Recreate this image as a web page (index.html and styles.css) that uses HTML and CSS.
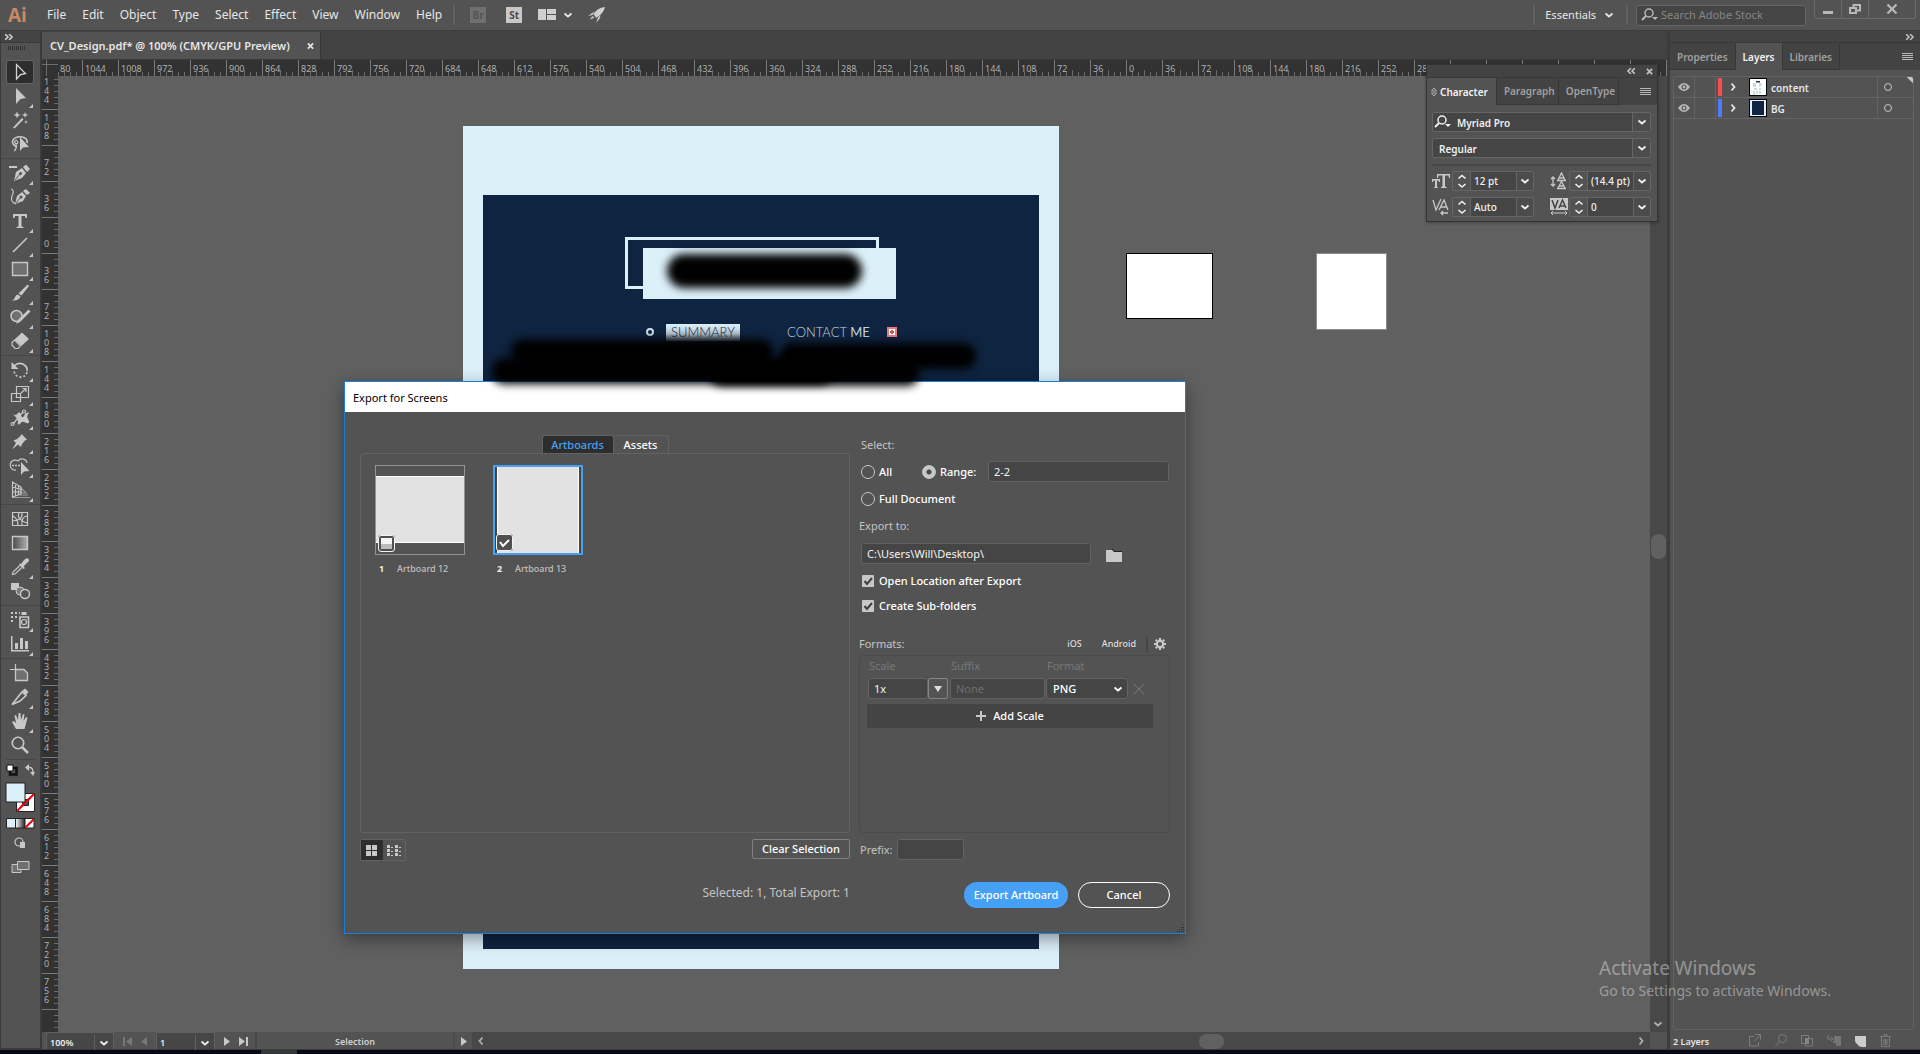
FILE: index.html
```html
<!DOCTYPE html>
<html lang="en">
<head>
<meta charset="utf-8">
<title>CV_Design.pdf</title>
<link rel="stylesheet" href="styles.css">
</head>
<body>
<svg class="defs" aria-hidden="true">
  <symbol id="chev" viewBox="0 0 10 10"><path d="M1.500 3.500L5 6.500L8.500 3.500" fill="none" stroke="currentColor" stroke-width="1.800"/></symbol>
  <symbol id="updown" viewBox="0 0 10 16"><path d="M1.500 5.500L5 2.500L8.500 5.500M1.500 11L5 14L8.500 11" fill="none" stroke="currentColor" stroke-width="1.600"/></symbol>
  <symbol id="dbl" viewBox="0 0 8 6"><path d="M0 0L3 3L0 6M4 0L7 3L4 6" fill="none" stroke="currentColor" stroke-width="1.600"/></symbol>
  <symbol id="cross" viewBox="0 0 8 8"><path d="M1 1L7 7M7 1L1 7" stroke="currentColor" stroke-width="2"/></symbol>
  <symbol id="burger" viewBox="0 0 11 8"><path d="M0 .5H11M0 2.500H11M0 4.500H11M0 6.500H11" stroke="currentColor"/></symbol>
  <symbol id="lens" viewBox="0 0 18 14"><circle cx="8" cy="5" r="4" fill="none" stroke="currentColor" stroke-width="1.500"/><path d="M5 8L1 12" stroke="currentColor" stroke-width="2"/><path d="M11 9H17L14 12Z" fill="currentColor"/></symbol>
  <symbol id="eye" viewBox="0 0 12 8"><path d="M0 4Q6 -4 12 4Q6 12 0 4Z" fill="currentColor"/><circle cx="6" cy="4" r="2.500" fill="#535353"/><circle cx="6" cy="4" r="1.400" fill="currentColor"/></symbol>
</svg>
<div class="app">
  <header class="menubar">
    <span class="logo">Ai</span>
    <nav class="menus">
      <button>File</button><button>Edit</button><button>Object</button><button>Type</button><button>Select</button><button>Effect</button><button>View</button><button>Window</button><button>Help</button>
    </nav>
    <span class="bar-sep"></span>
    <button class="badge dim">Br</button>
    <button class="badge">St</button>
    <button class="arrange" aria-label="Arrange documents"><svg width="18" height="11"><path d="M0 0H8V11H0ZM9 0H18V5H9ZM9 6H18V11H9Z" fill="#cfcfcf"/></svg><svg class="i10"><use href="#chev"/></svg></button>
    <button class="rocket" aria-label="GPU performance"><svg width="18" height="18" viewBox="0 0 20 18"><path d="M19 0Q10 1 6 8L9 12Q17 8 19 0ZM7 5L0 10L5 9ZM11 12L9 18L13 13L14 9ZM5 10L2 14L7 12Z" fill="#cfcfcf"/></svg></button>
    <span class="grow"></span>
    <span class="bar-sep"></span>
    <button class="workspace">Essentials<svg class="i10"><use href="#chev"/></svg></button>
    <span class="bar-sep"></span>
    <label class="search"><svg width="18" height="14"><use href="#lens"/></svg><input type="text" aria-label="Search Adobe Stock" placeholder="Search Adobe Stock"></label>
    <div class="winbtns">
      <button aria-label="Minimize"><svg width="12" height="10"><path d="M1 7H11V10H1Z" fill="#b8b8b8"/></svg></button>
      <button aria-label="Restore"><svg width="12" height="10" fill="none" stroke="#b8b8b8" stroke-width="2"><path d="M1 4H7V9H1ZM4.500 3V1H11V6.500H8"/></svg></button>
      <button aria-label="Close"><svg width="12" height="10"><path d="M1.500 .5L10.500 9.500M10.500 .5L1.500 9.500" stroke="#b8b8b8" stroke-width="2.200"/></svg></button>
    </div>
  </header>

  <main class="work">
    <aside class="tools">
      <div class="tools-head"><svg width="8" height="6"><use href="#dbl"/></svg></div>
      <div class="grip"></div>
      <div class="toolset">
        <button class="on" aria-label="Selection"><svg viewBox="0 0 24 24"><path d="M8.500 4.500V19L12.500 14.500L17.500 13.500Z" fill="none" stroke="#d4d4d4" stroke-width="1.300"/></svg></button>
        <button class="more" aria-label="Direct selection"><svg viewBox="0 0 24 24"><path d="M8 4V20L12.500 15L18 14Z"/></svg></button>
        <button aria-label="Magic wand"><svg viewBox="0 0 24 24"><path d="M5 19.500L14 10L15.500 11.500L6.500 20.500ZM9 3.500L10 6L12.500 7L10 8L9 10.500L8 8L5.500 7L8 6ZM17 4L17.700 6L20 7L17.700 8L17 10L16.300 8L14 7L16.300 6ZM18 12L18.500 13.500L20 14L18.500 14.500L18 16L17.500 14.500L16 14L17.500 13.500Z"/></svg></button>
        <button aria-label="Lasso"><svg viewBox="0 0 24 24"><path d="M9 15Q3 12 5 8Q8 4 14 5Q20 6 19 11" class="s2"/><path d="M9 8Q5 9 8 12Q11 11 9 9M8 12Q9 17 6 19" class="s"/><path d="M12 5V19L15 15.500L21 15Z"/></svg></button>
      </div>
      <div class="toolset">
        <button class="more" aria-label="Delete anchor point"><svg viewBox="0 0 24 24"><path d="M1 5H9V7H1Z"/><path d="M6 20L8 11L14 7L18 12L14 17ZM15 6L18 3.500L22 8L19 11Z"/><path d="M7 19L12 13" stroke="#535353"/><circle cx="12.500" cy="12.500" r="1.500" fill="#535353"/></svg></button>
        <button aria-label="Curvature"><svg viewBox="0 0 24 24"><path d="M3 4Q7 5 4 11Q2 17 8 19" class="s"/><path d="M7 19L9 11L14 7L18 11L15 16ZM15 6L18 4L22 8L19 10Z"/><path d="M8 18L13 12" stroke="#535353"/><circle cx="13" cy="12" r="1.500" fill="#535353"/></svg></button>
        <button class="more" aria-label="Type"><svg viewBox="0 0 24 24"><path d="M5 5H19V9H17.500L17 7H13.500V17.500L15.500 18V19H8.500V18L10.500 17.500V7H7L6.500 9H5Z"/></svg></button>
        <button class="more" aria-label="Line segment"><svg viewBox="0 0 24 24"><path d="M5 19L19 5" class="s2"/></svg></button>
        <button class="more" aria-label="Rectangle"><svg viewBox="0 0 24 24"><path d="M4.500 5.500H19.500V18.500H4.500Z" fill="#707070" stroke="#c8c8c8" stroke-width="1.400"/></svg></button>
        <button class="more" aria-label="Paintbrush"><svg viewBox="0 0 24 24"><path d="M19.500 3.500L21 5L13.500 14.500L10.500 12.500ZM10 13.500L12.500 15.500Q11 20 4 19.500Q7 18 7 16Q8 13.500 10 13.500Z"/></svg></button>
        <button class="more" aria-label="Shaper"><svg viewBox="0 0 24 24"><circle cx="8.500" cy="11" r="5.500" fill="#707070" stroke="#c8c8c8" stroke-width="1.500"/><path d="M20.500 4.500L22.500 6.500L12 17L8 19L10 15Z"/></svg></button>
        <button class="more" aria-label="Eraser"><svg viewBox="0 0 24 24"><path d="M14 3.500L21 10L13.500 17L6.500 10.500Z"/><path d="M6.500 11L12.500 17L10 19.500H7L4 16V13.500Z" class="s"/></svg></button>
      </div>
      <div class="toolset">
        <button class="more" aria-label="Rotate"><svg viewBox="0 0 24 24"><path d="M6 8Q10 4 15 6Q20 9 19 13" class="s2"/><path d="M3.500 4V11H10.500Z"/><path d="M19 14Q17 20 11 19Q7 18 6 13" class="s2" stroke-dasharray="2 2"/></svg></button>
        <button class="more" aria-label="Scale"><svg viewBox="0 0 24 24"><path d="M3.500 11.500H12.500V19.500H3.500ZM8.500 4.500H20.500V15.500H8.500ZM13 11L18 6.500M14.500 6.500H18V10" class="s"/></svg></button>
        <button class="more" aria-label="Width"><svg viewBox="0 0 24 24"><path d="M5 8Q8 10 9 8Q12 4 13 9Q14 13 16 10Q18 5 21 7Q18 10 20 13Q23 18 18 17Q14 14 12 18Q9 20 10 15Q9 12 5 8Z"/><path d="M5 18L15 6" class="s"/><circle cx="4.500" cy="18" r="1.500" class="s"/><circle cx="16" cy="5.500" r="1.500" class="s"/></svg></button>
        <button class="more" aria-label="Puppet warp"><svg viewBox="0 0 24 24"><path d="M13.500 4L19 9.500L17 10.500L14 14L13 17L10 14.500L4 19.500L8 13L5.500 10.500L9 9L12.500 6Z"/></svg></button>
        <button class="more" aria-label="Shape builder"><svg viewBox="0 0 24 24"><path d="M8 16A5 5 0 1 1 10 7A5 5 0 0 1 19 9" class="s"/><path d="M4 11.500H14" class="s2" stroke-dasharray="2 1"/><path d="M13 8V21L16 17.500L21.500 17Z"/></svg></button>
        <button class="more" aria-label="Perspective grid"><svg viewBox="0 0 24 24"><path d="M4.500 4V19L13 16V9ZM4 9L13 11.500M4 14L13 14M7.500 5.500V18M10.500 7.500V17" class="s"/><path d="M13 10L18 15H13ZM4 19.500H22M12 17H20" class="s" opacity=".6"/></svg></button>
      </div>
      <div class="toolset">
        <button aria-label="Mesh"><svg viewBox="0 0 24 24"><path d="M4.500 5.500H19.500V18.500H4.500ZM5 9Q10 12 10 18M5 14Q15 13 14 6M11 6Q8 12 19 16M19 9Q13 10 14 18" class="s"/></svg></button>
        <button aria-label="Gradient"><svg viewBox="0 0 24 24"><defs><linearGradient id="g1"><stop stop-color="#4a4a4a"/><stop offset="1" stop-color="#b0b0b0"/></linearGradient></defs><path d="M4.500 5.500H19.500V18.500H4.500Z" fill="url(#g1)" stroke="#c8c8c8" stroke-width="1.400"/></svg></button>
        <button class="more" aria-label="Eyedropper"><svg viewBox="0 0 24 24"><path d="M13 9L16 5Q19 2 20.500 4Q22 6 19 8L15.500 11.500L17 13L15.500 14L11 9.500L12 8.500Z"/><path d="M12 10.500L5 17L4.500 19.500L7 19L14 12.500" class="s"/></svg></button>
        <button aria-label="Blend"><svg viewBox="0 0 24 24"><path d="M3 4H11V11H3Z"/><circle cx="12" cy="12" r="4" fill="#7b7b7b" stroke="#c8c8c8"/><circle cx="17" cy="15" r="4.500" fill="#535353" stroke="#c8c8c8" stroke-width="1.500"/></svg></button>
      </div>
      <div class="toolset">
        <button class="more" aria-label="Symbol sprayer"><svg viewBox="0 0 24 24"><path d="M3 4H5V6H3ZM7 4H9V6H7ZM11 4H12V6H11ZM3 8H5V10H3ZM7 8H9V10H7ZM3 12H5V14H3ZM13.500 4H18.500V7H13.500Z"/><path d="M12 9H20.500V19.500H12Z" class="s2"/><circle cx="16" cy="14" r="2.500" class="s"/></svg></button>
        <button class="more" aria-label="Column graph"><svg viewBox="0 0 24 24"><path d="M3 4H4.500V18H21V19.500H3ZM7 11H10V17H7ZM12 6H15V17H12ZM17 9H20V17H17Z"/></svg></button>
      </div>
      <div class="toolset">
        <button aria-label="Artboard"><svg viewBox="0 0 24 24"><path d="M7.500 3V8M2 8.500H7" class="s"/><path d="M7.500 8.500H16L19.500 12V19.500H7.500Z" fill="#707070" stroke="#c8c8c8" stroke-width="1.300"/></svg></button>
        <button class="more" aria-label="Slice"><svg viewBox="0 0 24 24"><path d="M4 19.500L14 7L18 10.500L12 16L4 19.500Z" class="s2"/><path d="M14 6L17 3.500L20.500 7L18 10Z"/></svg></button>
        <button class="more" aria-label="Hand"><svg viewBox="0 0 24 24"><path d="M8 20L4 13L5.500 12L8 14L6.500 6.500L8 6L10 11L10.500 4H12.500L13 11L15 5L16.500 5.500L15.500 12L18 8L19.500 9L16.500 20Z"/></svg></button>
        <button aria-label="Zoom"><svg viewBox="0 0 24 24"><circle cx="10" cy="10" r="5.700" class="s2"/><path d="M14 14L20 20" stroke="#c8c8c8" stroke-width="2.500"/></svg></button>
      </div>
      <div class="swaps">
        <svg width="12" height="12"><path d="M4 4H10.500V10.500H4Z" fill="none" stroke="#111" stroke-width="2.500"/><path d="M1 1H7V7H1Z" fill="#fff" stroke="#111"/></svg>
        <svg width="10" height="12"><path d="M1 3.500H5Q8 3.500 8 9" fill="none" stroke="#c8c8c8" stroke-width="1.300"/><path d="M0 3.500L4 0V7ZM8 12L5 8H10Z" fill="#c8c8c8"/></svg>
      </div>
      <svg class="fillstroke" width="31" height="31"><path d="M11.500 11.500H29.500V29.500H11.500Z" fill="#fff" stroke="#222"/><path d="M12 29L29 12" stroke="#f00012" stroke-width="2"/><path d="M17.500 17.500H23.500V23.500H17.500Z" fill="#535353" stroke="#222"/><path d="M16 25L25 16" stroke="#f00012" stroke-width="2"/><path d="M1 1H20V20H1Z" fill="#dcf0fa" stroke="#222"/></svg>
      <svg class="modes" width="29" height="11"><defs><linearGradient id="g2"><stop stop-color="#fff"/><stop offset="1" stop-color="#222"/></linearGradient></defs><path d="M.5 .5H9.500V10H.5Z" fill="#dcf0fa" stroke="#222"/><path d="M9.500 .5H19V10H9.500Z" fill="url(#g2)" stroke="#222"/><path d="M19 .5H28V10H19Z" fill="#fff" stroke="#222"/><path d="M19.500 9.500L28 1" stroke="#f00012" stroke-width="2"/></svg>
      <div class="toolset last">
        <button aria-label="Draw mode"><svg viewBox="0 0 24 24"><circle cx="11" cy="11" r="4" class="s"/><path d="M12 11H17V17H12Z"/></svg></button>
        <button aria-label="Screen mode"><svg viewBox="0 0 24 24"><path d="M4 9.500H13V17.500H4Z" fill="#707070" stroke="#c8c8c8"/><path d="M9.500 6.500H21V14.500H9.500Z" fill="#707070" stroke="#c8c8c8"/></svg></button>
      </div>
    </aside>

    <section class="doc">
      <div class="tabs"><div class="tab">CV_Design.pdf* @ 100% (CMYK/GPU Preview)<button aria-label="Close document"><svg width="7" height="8"><use href="#cross"/></svg></button></div></div>
      <div class="view">
        <div class="corner"></div>
        <div class="hruler"><div class="hticks"><span>80</span><span>1044</span><span>1008</span><span>972</span><span>936</span><span>900</span><span>864</span><span>828</span><span>792</span><span>756</span><span>720</span><span>684</span><span>648</span><span>612</span><span>576</span><span>540</span><span>504</span><span>468</span><span>432</span><span>396</span><span>360</span><span>324</span><span>288</span><span>252</span><span>216</span><span>180</span><span>144</span><span>108</span><span>72</span><span>36</span><span>0</span><span>36</span><span>72</span><span>108</span><span>144</span><span>180</span><span>216</span><span>252</span><span>28</span></div></div>
        <div class="vruler"><span>144</span><span>108</span><span>72</span><span>36</span><span>0</span><span>36</span><span>72</span><span>108</span><span>144</span><span>180</span><span>216</span><span>252</span><span>288</span><span>324</span><span>360</span><span>396</span><span>432</span><span>468</span><span>504</span><span>540</span><span>576</span><span>612</span><span>648</span><span>684</span><span>720</span><span>756</span></div>
        <div class="canvas">
          <div class="page">
            <div class="cv">
              <div class="frame"></div>
              <div class="plate"></div>
              <span class="ring"></span>
              <h2 class="summary">SUMMARY</h2>
              <h2 class="contact">CONTACT <b>ME</b></h2>
              <svg class="plus" width="10" height="10"><path d="M0 0H10V10H0Z" fill="#e87c7c"/><path d="M2 2H8V8H2Z" fill="#fff"/><path d="M4 3H6V4H7V6H6V7H4V6H3V4H4Z" fill="#d85050"/></svg>
            </div>
          </div>
          <div class="board wide"></div>
          <div class="board tall"></div>
        </div>
        <div class="vscroll"><i></i><svg class="i10"><use href="#chev"/></svg></div>
        <footer class="status">
          <label class="stfield"><input type="text" value="100%" aria-label="Zoom"><svg class="i10"><use href="#chev"/></svg></label>
          <button class="st-prev off" aria-label="First"><svg width="9" height="9"><path d="M0 0H2V9H0ZM9 0V9L3 4.500Z"/></svg></button>
          <button class="st-prev off" aria-label="Previous"><svg width="6" height="9"><path d="M6 0V9L0 4.500Z"/></svg></button>
          <label class="stfield page-no"><input type="text" value="1" aria-label="Artboard number"><svg class="i10"><use href="#chev"/></svg></label>
          <button class="st-next" aria-label="Next"><svg width="6" height="9"><path d="M0 0V9L6 4.500Z"/></svg></button>
          <button class="st-next" aria-label="Last"><svg width="9" height="9"><path d="M7 0H9V9H7ZM0 0V9L6 4.500Z"/></svg></button>
          <span class="st-tool">Selection</span>
          <button class="st-menu" aria-label="Status menu"><svg width="6" height="9"><path d="M0 0V9L6 4.500Z"/></svg></button>
          <div class="hscroll"><svg class="i10 turn-left"><use href="#chev"/></svg><i></i><svg class="i10 turn-right"><use href="#chev"/></svg></div>
        </footer>
      </div>
    </section>

    <aside class="dock">
      <div class="dock-head"><svg width="8" height="6"><use href="#dbl"/></svg></div>
      <div class="ptabs"><button>Properties</button><button class="on">Layers</button><button>Libraries</button><svg width="11" height="8"><use href="#burger"/></svg></div>
      <div class="layers">
        <div class="layer red"><span class="cell"><svg width="12" height="8"><use href="#eye"/></svg></span><span class="cell"></span><i class="color"></i><svg class="i10 turn-right"><use href="#chev"/></svg><svg class="thumb" width="18" height="18"><path d="M0 0H18V18H0Z" fill="#000"/><path d="M1 1H17V17H1Z" fill="#fff"/><path d="M7 3H11V4.500H7Z" fill="#234"/><path d="M4 6H7M10 6H13M4 8H7M10 8H12M5 11H8M10 11H12M5 13V17M8 13V16M11 13V16" stroke="#9bb" /></svg><span class="name">content</span><span class="target"><i></i></span></div>
        <div class="layer blue"><span class="cell"><svg width="12" height="8"><use href="#eye"/></svg></span><span class="cell"></span><i class="color"></i><svg class="i10 turn-right"><use href="#chev"/></svg><svg class="thumb" width="18" height="18"><path d="M0 0H18V18H0Z" fill="#000"/><path d="M1 1H17V17H1Z" fill="#dff0fa"/><path d="M3 2H15V16H3Z" fill="#0f2440"/></svg><span class="name">BG</span><span class="target"><i></i></span></div>
      </div>
      <div class="dock-foot"><span>2 Layers</span>
        <svg width="12" height="13" viewBox="0 0 12 13"><path d="M5 2.500H.5V12H9.500V8M6 .5H11.500V5.500M11.500 .5L5.500 7" class="d"/></svg>
        <svg width="12" height="13" viewBox="0 0 12 13"><circle cx="7.500" cy="4.500" r="4" class="d"/><path d="M5 7.500L0 12.500" class="d"/></svg>
        <svg width="12" height="13" viewBox="0 0 12 13"><path d="M.5 1.500H7.500V9.500H.5ZM4.500 4.500H11.500V12H4.500Z" class="d"/><path d="M4 4H8V10H4Z" fill="#848484"/></svg>
        <svg width="14" height="13" viewBox="0 0 14 13"><path d="M1 1V5H6M4 3L6 5L4 7" class="d"/><path d="M7 2H14V12H9V9H6V7H7Z" fill="#757575"/></svg>
        <svg width="11" height="12" viewBox="0 0 11 12"><path d="M0 1H11V12H6L0 6Z" fill="#ccc"/><path d="M0 7H5V12Z" fill="#ccc"/></svg>
        <svg width="11" height="13" viewBox="0 0 11 13"><path d="M0 2.500H11M4 2V.5H7V2M1.500 3V12.500H9.500V3M4 5V11M5.500 5V11M7 5V11" class="d"/></svg>
      </div>
    </aside>
  </main>
  <div class="taskbar"><i></i></div>

  <section class="charpanel">
    <div class="char-head"><svg class="flip" width="8" height="6"><use href="#dbl"/></svg><svg width="7" height="7"><use href="#cross"/></svg></div>
    <div class="ptabs"><button class="on"><svg width="6" height="10"><path d="M.5 4L3 1L5.500 4ZM.5 6L3 9L5.500 6Z" fill="none" stroke="#aaa"/></svg>Character</button><button>Paragraph</button><button>OpenType</button><svg width="11" height="8"><use href="#burger"/></svg></div>
    <div class="char-body">
      <label class="combo"><svg width="18" height="14"><use href="#lens"/></svg><input type="text" value="Myriad Pro" aria-label="Font family"><span><svg class="i10"><use href="#chev"/></svg></span></label>
      <label class="combo style"><input type="text" value="Regular" aria-label="Font style"><span><svg class="i10"><use href="#chev"/></svg></span></label>
      <hr>
      <div class="nums">
        <label class="num"><svg width="18" height="16" fill="#c8c8c8"><path d="M5 1H18V5H17L16.500 2.500H13V13.500L14.500 14V15H9V14L10.500 13.500V2.500H6.500L6 5H5ZM0 6H8V9H7L6.500 7.500H5V14L6 14.500V15H2V14.500L3 14V7.500H1.500L1 9H0Z"/></svg><span class="spin"><svg width="10" height="16"><use href="#updown"/></svg></span><input type="text" value="12 pt" aria-label="Font size"><span class="dd"><svg class="i10"><use href="#chev"/></svg></span></label>
        <label class="num"><svg width="18" height="18" fill="none" stroke="#c8c8c8" stroke-width="1.300"><path d="M3 5V14M1 7L3 5L5 7M1 12L3 14L5 12M7 8.500H16M7 16.500H16M8 8L11.500 1L15 8M9 6H14M8 16L11.500 9.500L15 16M9 14H14"/></svg><span class="spin"><svg width="10" height="16"><use href="#updown"/></svg></span><input type="text" value="(14.4 pt)" aria-label="Leading"><span class="dd"><svg class="i10"><use href="#chev"/></svg></span></label>
        <label class="num"><svg width="18" height="18" fill="none" stroke="#c8c8c8" stroke-width="1.300"><path d="M1 2L4 12L9 1M7 12L12 2L16 12M9 9H15M16 15H9M11 13L9 15L11 17"/></svg><span class="spin"><svg width="10" height="16"><use href="#updown"/></svg></span><input type="text" value="Auto" aria-label="Kerning"><span class="dd"><svg class="i10"><use href="#chev"/></svg></span></label>
        <label class="num"><svg width="18" height="18"><path d="M0 0H18V12H0Z" fill="#c8c8c8"/><path d="M2 2L5 10L8 2M9 10L12.500 2L16 10M10 8H15" fill="none" stroke="#444" stroke-width="1.500"/><path d="M1 15H17M3 13L1 15L3 17M15 13L17 15L15 17" fill="none" stroke="#c8c8c8"/></svg><span class="spin"><svg width="10" height="16"><use href="#updown"/></svg></span><input type="text" value="0" aria-label="Tracking"><span class="dd"><svg class="i10"><use href="#chev"/></svg></span></label>
      </div>
    </div>
  </section>

  <section class="dialog" role="dialog" aria-labelledby="dlg">
    <h1 id="dlg">Export for Screens</h1>
    <div class="dlg-body">
      <div class="chooser">
        <div class="dtabs"><button class="on">Artboards</button><button>Assets</button></div>
        <div class="boards">
          <figure><div class="shot land"><input type="checkbox" aria-label="Artboard 12"></div><figcaption><b>1</b>Artboard 12</figcaption></figure>
          <figure><div class="shot port"><input type="checkbox" checked aria-label="Artboard 13"></div><figcaption><b>2</b>Artboard 13</figcaption></figure>
        </div>
      </div>
      <div class="options">
        <h2>Select:</h2>
        <div class="line range"><label class="all"><input type="radio" name="sel">All</label><label><input type="radio" name="sel" checked>Range:</label><input class="box" type="text" value="2-2" aria-label="Range value"></div>
        <div class="line short"><label><input type="radio" name="sel">Full Document</label></div>
        <h3>Export to:</h3>
        <div class="line path"><input class="box" type="text" value="C:\Users\Will\Desktop\" aria-label="Export path"><button aria-label="Browse"><svg width="16" height="13"><path d="M0 1H6L8 3H16V13H0Z" fill="#c8c8c8"/><path d="M6 .5H7L8 2.500H16" fill="none" stroke="#222"/></svg></button></div>
        <div class="line short"><label><input type="checkbox" checked>Open Location after Export</label></div>
        <div class="line short close"><label><input type="checkbox" checked>Create Sub-folders</label></div>
        <div class="fmt-head"><h3>Formats:</h3><button>iOS</button><button>Android</button><i></i><button aria-label="Settings"><svg width="12" height="12" viewBox="0 0 12 12"><circle cx="6" cy="6" r="3.200" fill="none" stroke="#c8c8c8" stroke-width="2.200"/><path d="M6 0V2M6 10V12M0 6H2M10 6H12M1.700 1.700L3 3M9 9L10.300 10.300M10.300 1.700L9 3M3 9L1.700 10.300" stroke="#c8c8c8" stroke-width="2.200"/></svg></button></div>
        <div class="formats">
          <div class="fgrid">
            <label for="sc">Scale</label><label for="su">Suffix</label><label for="fo">Format</label><span></span>
            <span class="scale"><input id="sc" class="box" type="text" value="1x"><button aria-label="Scale options"><svg width="8" height="6"><path d="M0 0H8L4 6Z" fill="#ddd"/></svg></button></span>
            <input id="su" class="box" type="text" placeholder="None">
            <span class="selwrap"><select id="fo"><option>PNG</option></select><svg class="i10"><use href="#chev"/></svg></span>
            <button class="del" aria-label="Remove"><svg width="10" height="10"><path d="M0 0L10 10M10 0L0 10" stroke="#7a7a7a"/></svg></button>
          </div>
          <button class="add"><svg width="10" height="10"><path d="M4 0H6V4H10V6H6V10H4V6H0V4H4Z" fill="#c8c8c8"/></svg>Add Scale</button>
        </div>
      </div>
      <div class="underleft"><div class="seg"><button class="on" aria-label="Grid view"><svg width="12" height="11"><path d="M0 0H5V5H0ZM6 0H11V5H6ZM0 6H5V11H0ZM6 6H11V11H6Z" fill="#c8c8c8"/></svg></button><button aria-label="List view"><svg width="15" height="11"><path d="M0 0H3V3H0ZM0 4H3V7H0ZM0 8H3V11H0ZM8 0H11V3H8ZM8 4H11V7H8ZM8 8H11V11H8ZM4 2H6V3H4ZM4 6H6V7H4ZM4 10H6V11H4ZM12 2H14V3H12ZM12 6H14V7H12ZM12 10H14V11H12Z" fill="#c8c8c8"/></svg></button></div><button class="clear">Clear Selection</button></div>
      <label class="prefix">Prefix:<input class="box" type="text"></label>
      <output>Selected: 1, Total Export: 1</output>
      <div class="actions"><button class="primary">Export Artboard</button><button class="cancel">Cancel</button></div>
    </div>
    <svg class="resize" width="10" height="10"><path d="M8 1H9V2H8ZM6 4H7V5H6ZM8 4H9V5H8ZM4 6H5V7H4ZM6 6H7V7H6ZM8 6H9V7H8ZM2 8H3V9H2ZM4 8H5V9H4ZM6 8H7V9H6ZM8 8H9V9H8Z" fill="#2e2e2e"/></svg>
  </section>

  <div class="smudge s-name"></div><div class="smudge s-intro"></div><div class="smudge s-mail"></div><div class="smudge s-text"></div><div class="smudge s-phone"></div>
  <div class="watermark"><p>Activate Windows</p><p>Go to Settings to activate Windows.</p></div>
</div>
</body>
</html>
```
FILE: styles.css
```css
* { box-sizing: border-box; }
body { margin: 0; background: #535353; color: #e6e6e6; font: 11px/16px "Noto Sans", sans-serif; }
button, input, select { font: inherit; color: inherit; background: none; border: 0; padding: 0; margin: 0; min-width: 0; }
h1, h2, h3, p, figure { margin: 0; font-size: inherit; font-weight: 400; }
svg { flex: none; display: block; }
.defs { display: none; }
.i10 { width: 10px; height: 10px; }
.turn-right { transform: rotate(-90deg); }
.turn-left { transform: rotate(90deg); }
.flip { transform: scaleX(-1); }
.grow { flex: 1; }
.app { position: relative; display: flex; flex-direction: column; height: 100vh; overflow: hidden; }

/* menu bar */
.menubar { display: flex; align-items: center; height: 31px; padding: 0 4px 1px 8px; border-bottom: 1px solid #3c3c3c; flex: none; }
.logo { width: 39px; font: 700 19px/26px "Open Sans", sans-serif; color: #c98a63; }
.menus { display: flex; gap: 16px; font-size: 12px; margin-right: 11px; }
.bar-sep { width: 2px; height: 20px; background: #616161; }
.badge { width: 16px; height: 16px; margin-left: 15px; background: #c8c8c8; color: #484848; font-size: 10px; font-weight: 700; }
.badge + .badge { margin-left: 20px; }
.badge.dim { background: #707070; color: #555; }
.arrange { display: flex; align-items: center; gap: 7px; margin-left: 16px; }
.rocket { margin-left: 15px; }
.workspace { display: flex; align-items: center; gap: 8px; margin: 0 12px 0 10px; }
.search { display: flex; align-items: center; gap: 2px; width: 170px; height: 21px; margin: 1px 8px 0 8px; padding-left: 4px; border: 1px solid #666; border-radius: 3px; background: #454545; color: #b8b8b8; }
.search input { flex: 1; }
input::placeholder { color: #858585; opacity: 1; }
.winbtns { display: flex; align-self: flex-start; height: 19px; border: 1px solid #6a6a6a; border-top: 0; border-radius: 0 0 3px 3px; }
.winbtns button { width: 27px; display: flex; align-items: center; justify-content: center; border-right: 1px solid #6a6a6a; }
.winbtns button:last-child { width: 46px; border: 0; }

/* toolbar */
.work { flex: 1; display: flex; min-height: 0; }
.tools { width: 42px; border: solid #3a3a3a; border-width: 0 2px 2px 1px; flex: none; overflow: hidden; }
.tools-head { height: 12px; padding: 3px 4px; background: #444; border-bottom: 1px solid #3a3a3a; color: #ccc; }
.grip { width: 17px; height: 4px; margin: 3px auto 10px 7px; background: repeating-linear-gradient(90deg, #333 0 1px, #535353 1px 2px); }
.toolset { padding-left: 5px; }
.toolset + .toolset { border-top: 1px solid #464646; padding-top: 2px; margin-top: 2px; }
.toolset button { position: relative; display: flex; align-items: center; justify-content: center; width: 28px; height: 24px; }
.toolset svg { width: 24px; height: 24px; fill: #c8c8c8; }
.toolset button.on { background: #2d2d2d; border: 1px solid #666; border-radius: 3px; height: 24px; }
.more::after { content: ""; position: absolute; right: 1px; bottom: 0; border: 2px solid #c8c8c8; border-top-color: transparent; border-left-color: transparent; }
.s, .toolset .s { fill: none; stroke: #c8c8c8; stroke-width: 1.2; }
.s2, .toolset .s2 { fill: none; stroke: #c8c8c8; stroke-width: 1.6; }
.swaps { display: flex; justify-content: space-between; width: 29px; margin: 2px 0 0 5px; padding-top: 4px; border-top: 1px solid #464646; }
.fillstroke { margin: 6px 0 5px 4px; }
.modes { margin-left: 5px; }
.toolset.last { margin-top: 2px; }

/* document */
.doc { flex: 1; display: flex; flex-direction: column; min-width: 0; }
.tabs { height: 29px; background: #424242; border-bottom: 1px solid #3a3a3a; flex: none; display: flex; padding-top: 1px; }
.tab { display: flex; align-items: center; justify-content: space-between; width: 279px; padding: 0 6px 0 8px; background: #535353; border-right: 1px solid #383838; font-weight: 600; white-space: nowrap; }
.view { flex: 1; display: grid; grid-template: 16px 1fr 18px / 16px 1fr 17px; min-height: 0; }
.corner { background: linear-gradient(#6e6e6e, #6e6e6e) 4px 0 / 1px 100% no-repeat, linear-gradient(#6e6e6e, #6e6e6e) 0 4px / 100% 1px no-repeat, #323232; }
.hruler { grid-column: 2 / 4; overflow: hidden; background: #323232; color: #b0b0b0; font: 9px/12px "Noto Sans", sans-serif; }
.hticks { display: flex; height: 16px; background: linear-gradient(90deg, #7a7a7a 1px, transparent 1px) -12px 0 / 36px 16px, linear-gradient(90deg, #6a6a6a 1px, transparent 1px) 0 100% / 6px 4px repeat-x, linear-gradient(90deg, #6a6a6a 1px, transparent 1px) 6px 100% / 18px 6px repeat-x; }
.hticks span { width: 36px; padding: 3px 0 0 3px; flex: none; }
.hticks span:first-child { width: 24px; padding-left: 2px; }
.vruler { overflow: hidden; color: #b0b0b0; font: 9px/9px "Noto Sans", sans-serif; background: linear-gradient(#7a7a7a 1px, transparent 1px) 0 33px / 16px 36px, linear-gradient(#6a6a6a 1px, transparent 1px) 100% 3px / 4px 6px repeat-y, #323232; }
.vruler span { display: flex; align-items: flex-end; height: 36px; width: 10px; padding: 0 2px 5px; word-break: break-all; }
.vruler span:first-child { height: 33px; }
.canvas { position: relative; overflow: hidden; background: #606060; }
.page { position: absolute; left: 405px; top: 50px; width: 596px; height: 843px; padding: 69px 20px 20px; background: #dcf0fa; }
.cv { position: relative; height: 754px; background: #0f2440; }
.frame, .plate, .ring, .summary, .contact, .plus { position: absolute; }
.frame { left: 142px; top: 42px; width: 254px; height: 52px; border: 3px solid #dcf0fa; }
.plate { left: 160px; top: 53px; width: 253px; height: 51px; background: #dcf0fa; }
.ring { left: 163px; top: 133px; width: 8px; height: 8px; border: 2px solid #cfe0ec; border-radius: 50%; }
.summary, .contact { font: 300 13px/17px Lato, sans-serif; }
.summary { left: 183px; top: 129px; width: 74px; text-align: center; color: #1c2838; background: linear-gradient(#dcf0fa, #b4c6d4 60%, #5d6c7c); }
.contact { left: 304px; top: 129px; color: #c4d2de; white-space: nowrap; }
.plus { left: 404px; top: 132px; }
.board { position: absolute; top: 177px; background: #fff; }
.wide { left: 1068px; width: 87px; height: 66px; border: 1px solid #000; }
.tall { left: 1258px; width: 71px; height: 77px; border: 1px solid #8c8c8c; }
.vscroll { display: flex; flex-direction: column; align-items: center; justify-content: space-between; padding: 458px 1px 3px 0; background: #484848; color: #b0b0b0; }
.vscroll i { width: 15px; height: 25px; border-radius: 7px; background: #606060; }
.status { grid-column: 1 / 4; display: flex; align-items: stretch; background: #535353; font-size: 9px; font-weight: 600; padding-left: 4px; border-bottom: 1px solid #3a3a3a; color: #d0d0d0; }
.status button { display: flex; align-items: center; padding-top: 2px; fill: #c8c8c8; }
.status .off { fill: #777; }
.stfield { display: flex; align-items: center; width: 68px; padding: 3px 4px 0 3px; background: #464646; border: solid #606060; border-width: 1px 1px 0; color: #eee; }
.stfield input { flex: 1; width: 20px; border-right: 1px solid #606060; margin-right: 4px; }
.page-no { width: 59px; margin-left: 9px; }
.st-prev { margin-left: 9px; }
.st-next { margin-left: 9px; }
.st-tool { width: 200px; margin-left: 7px; border: solid #4a4a4a; border-width: 0 2px; text-align: center; line-height: 20px; height: 17px; }
.st-menu { width: 17px; justify-content: center; }
.hscroll { flex: 1; display: flex; align-items: center; justify-content: space-between; padding: 1px 4px 0; margin-right: 17px; background: #484848; color: #b0b0b0; }
.hscroll i { width: 25px; height: 15px; border-radius: 7px; background: #606060; margin-left: 300px; }

/* panels */
.dock { width: 253px; flex: none; display: flex; flex-direction: column; border-left: 3px solid #3c3c3c; }
.dock-head { height: 12px; display: flex; justify-content: flex-end; padding: 3px 6px; background: #434343; border-bottom: 1px solid #383838; color: #bbb; }
.ptabs { display: flex; align-items: center; background: #434343; height: 27px; font-size: 10px; font-weight: 600; color: #a0a0a0; }
.ptabs button { height: 27px; padding: 1px 7px 0; border-right: 1px solid #383838; border-bottom: 1px solid #383838; display: flex; align-items: center; gap: 3px; }
.ptabs .on { background: #535353; color: #f2f2f2; border-bottom: 0; }
.ptabs > svg { margin: 0 7px 0 auto; color: #b8b8b8; }
.layers { flex: 1; margin: 6px 6px 0 3px; border: 1px solid #636363; border-radius: 3px; background: linear-gradient(225deg, #c8c8c8 4px, transparent 5px); }
.layer { display: flex; align-items: center; height: 21px; border-bottom: 1px solid #636363; font-size: 10px; font-weight: 600; }
.cell { width: 21px; height: 20px; border-right: 1px solid #636363; display: flex; align-items: center; justify-content: center; color: #b8b8b8; }
.color { width: 4px; height: 18px; margin: 0 6px 0 2px; }
.red .color { background: #ff4b4b; }
.blue .color { background: #4b7bff; }
.thumb { margin: 0 4px 0 11px; }
.name { flex: 1; padding-top: 1px; }
.target { width: 36px; height: 20px; border-left: 1px solid #636363; display: flex; align-items: center; padding-left: 6px; }
.target i { width: 8px; height: 8px; border: 1px solid #c8c8c8; border-radius: 50%; }
.dock-foot { display: flex; align-items: center; height: 20px; gap: 14px; padding: 2px 29px 0 3px; border-bottom: 1px solid #3a3a3a; font-size: 9px; font-weight: 600; }
.dock-foot span { flex: 1; padding-top: 2px; }
.d { fill: none; stroke: #7c7c7c; }
.taskbar { height: 4px; background: #050a14; padding-left: 261px; flex: none; }
.taskbar i { display: block; width: 36px; height: 4px; background: #34373c; }
.charpanel { position: absolute; left: 1426px; top: 64px; width: 232px; background: #535353; border: 1px solid #333; box-shadow: 0 1px 3px rgba(0, 0, 0, .3); }
.char-head { display: flex; align-items: center; justify-content: flex-end; gap: 11px; height: 13px; padding-right: 4px; background: #434343; border-bottom: 1px solid #383838; color: #c0c0c0; }
.charpanel .ptabs { height: 27px; }
.charpanel .ptabs button { padding: 0 3px 0 7px; }
.charpanel .ptabs .on { padding: 0 8px 0 4px; }
.charpanel .ptabs > svg { margin-right: 6px; }
.char-body { padding: 7px 6px 4px 5px; }
.combo { display: flex; align-items: center; height: 20px; margin-bottom: 6px; border: 1px solid #666; border-radius: 2px; background: #454545; font-size: 10px; font-weight: 600; padding-left: 1px; color: #f0f0f0; }
.combo input { flex: 1; padding: 1px 0 0 5px; }
.combo > span, .dd { width: 18px; height: 18px; display: flex; align-items: center; justify-content: center; border-left: 1px solid #666; background: #4c4c4c; }
hr { margin: 0 0 5px; border: 0; border-top: 2px solid #464646; }
.nums { display: grid; grid-template-columns: 102px 101px; justify-content: space-between; gap: 6px 14px; }
.num { display: flex; align-items: center; color: #f0f0f0; height: 20px; }
.spin { margin-left: auto; width: 18px; height: 20px; border: 1px solid #666; border-right: 0; border-radius: 2px 0 0 2px; display: flex; align-items: center; justify-content: center; }
.num input { width: 46px; height: 20px; padding-left: 3px; border: 1px solid #666; border-right: 0; background: #454545; font-size: 10px; font-weight: 500; }
.dd { height: 20px; border: 1px solid #666; border-radius: 0 2px 2px 0; }

/* export dialog */
.dialog { position: absolute; left: 344px; top: 381px; width: 842px; height: 553px; background: #535353; border: 1px solid #1681dd; box-shadow: 0 5px 16px rgba(0, 0, 0, .4); }
.dialog h1 { height: 30px; padding-left: 8px; background: #fff; color: #000; line-height: 31px; }
.dlg-body { display: grid; grid-template: 398px 23px auto / 490px 311px; gap: 6px 9px; padding: 23px 15px 0; }
.chooser { display: flex; flex-direction: column; }
.dtabs { display: flex; justify-content: center; height: 18px; }
.dtabs button { border: 1px solid #636363; border-bottom: 0; width: 72px; border-radius: 3px 3px 0 0; line-height: 16px; color: #fff; font-weight: 500; }
.dtabs button + button { width: 55px; border-left: 0; }
.dtabs .on { background: #2d2d2d; color: #46a0f5; }
.boards { flex: 1; display: flex; gap: 28px; padding: 11px 14px; border: 1px solid #626262; border-radius: 3px; }
.shot { width: 90px; height: 90px; margin-bottom: 6px; display: flex; align-items: flex-end; }
.land { border: 1px solid #949494; background: linear-gradient(transparent 10px, #fff 10px 11px, #e2e2e2 11px 76px, #fff 76px 77px, transparent 77px); padding: 0 0 2px 2px; }
.port { border: 2px solid #46a0f5; background: linear-gradient(90deg, #444 2px, #fff 2px 3px, #e2e2e2 3px 83px, #fff 83px 84px, #444 84px); padding: 0 0 2px 1px; }
.boards input { -webkit-appearance: none; appearance: none; width: 17px; height: 17px; border: 2px solid #505050; outline: 1px solid #f4f4f4; outline-offset: -1px; border-radius: 3px; background: linear-gradient(#f4f4f4 50%, #bbb 50%); box-shadow: inset 0 0 0 1px #505050; }
.boards input:checked { background: #505050 url("data:image/svg+xml,%3Csvg xmlns='http://www.w3.org/2000/svg' viewBox='0 0 13 13'%3E%3Cpath d='M2 6l3 4l6-6' fill='none' stroke='white' stroke-width='2'/%3E%3C/svg%3E") center / 13px 13px no-repeat; }
figcaption { font-size: 9px; color: #c0c0c0; padding-left: 4px; display: flex; font-weight: 500; }
figcaption b { width: 18px; color: #eee; }
.options { display: flex; flex-direction: column; color: #fff; font-weight: 500; }
.options h2, .options h3 { line-height: 20px; color: #c4c4c4; }
.options h2 { padding-left: 2px; height: 19px; }
.options > h3 { margin-top: 7px; }
.line { display: flex; align-items: center; height: 21px; margin-top: 7px; padding-left: 2px; }
.line.short { height: 20px; }
.line.close { margin-top: 5px; }
.line label { display: flex; align-items: center; gap: 4px; }
.line .all { width: 61px; }
.box { height: 21px; padding-left: 5px; background: #454545; border: 1px solid #636363; border-radius: 3px; font-weight: 400; color: #f4f4f4; }
.range { padding-right: 1px; }
.range .box { width: 181px; margin-left: auto; }
.path .box { width: 230px; margin-right: 15px; }
.path button { padding-top: 3px; }
.line input[type="radio"], .line input[type="checkbox"] { -webkit-appearance: none; appearance: none; width: 14px; height: 14px; border: 1px solid #c8c8c8; border-radius: 50%; }
.line input[type="radio"]:checked { background: radial-gradient(circle, #484848 2px, #c8c8c8 3px); }
.line input[type="checkbox"] { width: 12px; height: 12px; margin: 0 1px; border: 0; border-radius: 1px; background: #c8c8c8 url("data:image/svg+xml,%3Csvg xmlns='http://www.w3.org/2000/svg' viewBox='0 0 12 12'%3E%3Cpath d='M2.500 6l2.500 3l5-6' fill='none' stroke='%23404040' stroke-width='2'/%3E%3C/svg%3E") center / 12px 12px no-repeat; }
.fmt-head { display: flex; align-items: center; height: 20px; margin-top: 18px; padding-right: 4px; }
.fmt-head h3 { flex: 1; }
.fmt-head button { font-size: 9px; margin-left: 20px; color: #ddd; }
.fmt-head i { width: 2px; height: 15px; background: #454545; margin: 0 6px 0 10px; }
.fmt-head i + button { margin: 0; }
.formats { flex: 1; margin-top: 1px; padding: 1px 20px 0 7px; border: 1px solid #4b4b4b; border-radius: 3px; }
.fgrid { display: grid; grid-template: 20px 21px / 81px 95px 82px 12px; gap: 1px; padding-left: 1px; color: #787878; }
.fgrid label { font-weight: 400; padding-left: 1px; line-height: 18px; }
.scale { display: flex; }
.scale .box { width: 60px; }
.scale button { width: 20px; border: 1px solid #858585; border-radius: 2px; display: flex; align-items: center; justify-content: center; }
.fgrid .box::placeholder { color: #6e6e6e; }
.selwrap { display: grid; align-items: center; justify-items: end; color: #fff; background: #454545; border: 1px solid #636363; border-radius: 3px; }
.selwrap > * { grid-area: 1 / 1; }
.selwrap svg { margin-right: 4px; pointer-events: none; }
.selwrap select { -webkit-appearance: none; appearance: none; width: 100%; height: 19px; padding-left: 6px; }
.del { display: flex; align-items: center; padding-left: 5px; }
.add { display: flex; align-items: center; justify-content: center; gap: 7px; width: 286px; height: 24px; margin-top: 5px; background: #444; color: #fff; }
.underleft { display: flex; justify-content: space-between; align-items: flex-start; }
.seg { display: flex; border: 1px solid #636363; border-radius: 2px; height: 22px; }
.seg button { width: 22px; display: flex; align-items: center; justify-content: center; }
.seg .on { background: #2d2d2d; }
.clear { width: 98px; height: 20px; border: 1px solid #808080; border-radius: 2px; color: #fff; font-weight: 500; line-height: 16px; }
.prefix { display: flex; align-items: center; height: 21px; padding-left: 1px; color: #c4c4c4; }
.prefix .box { width: 67px; margin-left: 4px; }
.dlg-body output { text-align: right; padding-top: 17px; color: #c4c4c4; font-size: 12px; }
.actions { display: flex; justify-content: flex-end; gap: 10px; padding-top: 14px; }
.actions button { height: 26px; border-radius: 13px; color: #fff; font-weight: 500; }
.primary { width: 104px; background: #46a0f5; }
.actions .cancel { width: 92px; border: 1px solid #fff; }
.resize { position: absolute; right: 0; bottom: 0; }

/* brushed-over contact details */
.smudge { position: absolute; background: #000; border-radius: 12px; filter: blur(4px); }
.s-name { left: 667px; top: 254px; width: 195px; height: 34px; border-radius: 17px; }
.s-intro { left: 511px; top: 339px; width: 262px; height: 26px; }
.s-mail { left: 780px; top: 343px; width: 196px; height: 26px; }
.s-text { left: 492px; top: 358px; width: 340px; height: 26px; }
.s-phone { left: 710px; top: 360px; width: 209px; height: 26px; }
.watermark { position: absolute; left: 1599px; bottom: 53px; color: rgba(255, 255, 255, .4); font-size: 14px; line-height: 20px; white-space: nowrap; pointer-events: none; }
.watermark p:first-child { font-size: 19px; line-height: 26px; }
```
